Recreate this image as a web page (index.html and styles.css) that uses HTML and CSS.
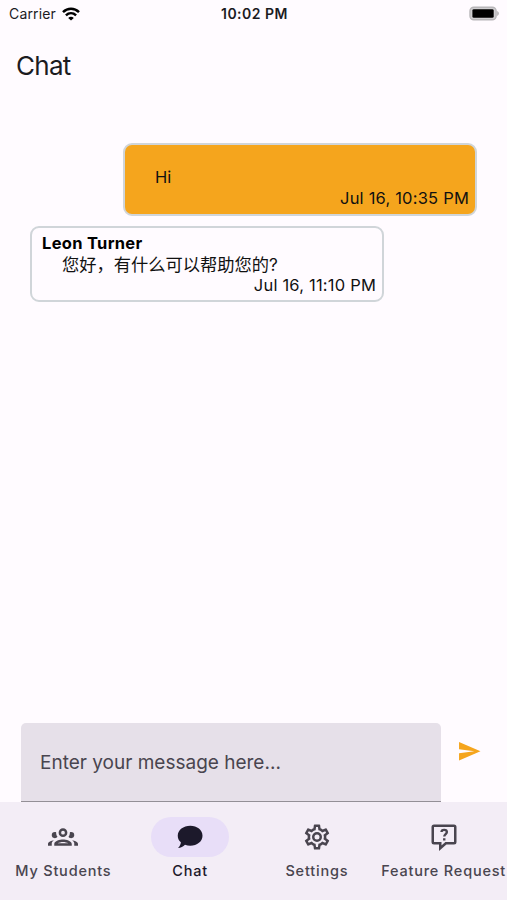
FILE: index.html
```html
<!DOCTYPE html>
<html lang="en">
<head>
  <meta charset="UTF-8" />
  <meta name="viewport" content="width=device-width, initial-scale=1" />
  <title>Chat</title>
  <link rel="stylesheet" href="styles.css">
</head>
<body>
  <div class="status-bar">
    <div class="carrier">
      <span>Carrier</span>
      <svg class="wifi" viewBox="0 0 18 14" fill="none" stroke="#000" stroke-width="2.5">
        <path d="M1 5.2C5.6.7 12.4.7 17 5.2" />
        <path d="M3.9 8.3C6.9 5.5 11.1 5.5 14.1 8.3" />
        <path d="M9 13.6L6.2 10.9C7.8 9.4 10.2 9.4 11.8 10.9Z" fill="#000" stroke="none" />
      </svg>
    </div>
    <span class="clock">10:02 PM</span>
    <svg class="battery" viewBox="0 0 32 15">
      <rect x="1" y="1" width="27" height="13" rx="4" fill="#d0ced1" stroke="#b8b6b9" stroke-width="1.4" />
      <rect x="3.5" y="3" width="22" height="9" rx="1.5" fill="#000" />
      <path d="M29 5C31.5 6 31.5 9 29 10Z" fill="#b8b6b9" />
    </svg>
  </div>

  <header class="header">
    <h1>Chat</h1>
  </header>

  <main class="messages">
    <div class="bubble sent">
      <p class="text">Hi</p>
      <time>Jul 16, 10:35 PM</time>
    </div>
    <div class="bubble received">
      <strong>Leon Turner</strong>
      <p class="text" lang="zh">您好，有什么可以帮助您的?</p>
      <time>Jul 16, 11:10 PM</time>
    </div>
  </main>

  <form class="composer">
    <input class="message-input" type="text" placeholder="Enter your message here..." aria-label="Message" />
    <button class="send" type="button" aria-label="Send">
      <svg viewBox="0 0 24 24"><path d="M2,21L23,12L2,3V10L17,12L2,14V21Z" /></svg>
    </button>
  </form>

  <nav class="tabs">
    <a class="tab">
      <span class="pill">
        <svg viewBox="0 0 24 24"><path d="M12,5A3.5,3.5 0 0,0 8.5,8.5A3.5,3.5 0 0,0 12,12A3.5,3.5 0 0,0 15.5,8.5A3.5,3.5 0 0,0 12,5M12,7A1.5,1.5 0 0,1 13.5,8.5A1.5,1.5 0 0,1 12,10A1.5,1.5 0 0,1 10.5,8.5A1.5,1.5 0 0,1 12,7M5.5,8A2.5,2.5 0 0,0 3,10.5C3,11.44 3.53,12.25 4.29,12.68C4.65,12.88 5.06,13 5.5,13C5.94,13 6.35,12.88 6.71,12.68C7.08,12.47 7.39,12.17 7.62,11.81C6.89,10.86 6.5,9.7 6.5,8.5C6.5,8.41 6.5,8.31 6.5,8.22C6.2,8.08 5.86,8 5.5,8M18.5,8C18.14,8 17.8,8.08 17.5,8.22C17.5,8.31 17.5,8.41 17.5,8.5C17.5,9.7 17.11,10.86 16.38,11.81C16.5,12 16.63,12.15 16.78,12.3C16.94,12.45 17.1,12.58 17.29,12.68C17.65,12.88 18.06,13 18.5,13C18.94,13 19.35,12.88 19.71,12.68C20.47,12.25 21,11.44 21,10.5A2.5,2.5 0 0,0 18.5,8M12,14C9.66,14 5,15.17 5,17.5V19H19V17.5C19,15.17 14.34,14 12,14M4.71,14.55C2.78,14.78 0,15.76 0,17.5V19H3V17.07C3,16.06 3.69,15.22 4.71,14.55M19.29,14.55C20.31,15.22 21,16.06 21,17.07V19H24V17.5C24,15.76 21.22,14.78 19.29,14.55M12,16C13.53,16 15.24,16.5 16.23,17H7.77C8.76,16.5 10.47,16 12,16Z" /></svg>
      </span>
      <span class="label">My Students</span>
    </a>
    <a class="tab active">
      <span class="pill">
        <svg viewBox="0 0 24 24"><path d="M12.2,3C17.7,3 22,6.4 22,10.9C22,15.4 17.7,18.9 12.2,18.9C10.7,18.9 9.3,18.7 8,18.2C6.6,19.8 4.6,20.7 2.4,20.7C3.8,19.5 4.6,18 4.7,16.2C3.1,14.8 2.2,13 2.2,10.9C2.2,6.4 6.7,3 12.2,3Z" /></svg>
      </span>
      <span class="label">Chat</span>
    </a>
    <a class="tab">
      <span class="pill">
        <svg viewBox="0 0 24 24"><path d="M12,8A4,4 0 0,1 16,12A4,4 0 0,1 12,16A4,4 0 0,1 8,12A4,4 0 0,1 12,8M12,10A2,2 0 0,0 10,12A2,2 0 0,0 12,14A2,2 0 0,0 14,12A2,2 0 0,0 12,10M10,22C9.75,22 9.54,21.82 9.5,21.58L9.13,18.93C8.5,18.68 7.96,18.34 7.44,17.94L4.95,18.95C4.73,19.03 4.46,18.95 4.34,18.73L2.34,15.27C2.21,15.05 2.27,14.78 2.46,14.63L4.57,12.97L4.5,12L4.57,11L2.46,9.37C2.27,9.22 2.21,8.95 2.34,8.73L4.34,5.27C4.46,5.05 4.73,4.96 4.95,5.05L7.44,6.05C7.96,5.66 8.5,5.32 9.13,5.07L9.5,2.42C9.54,2.18 9.75,2 10,2H14C14.25,2 14.46,2.18 14.5,2.42L14.87,5.07C15.5,5.32 16.04,5.66 16.56,6.05L19.05,5.05C19.27,4.96 19.54,5.05 19.66,5.27L21.66,8.73C21.79,8.95 21.73,9.22 21.54,9.37L19.43,11L19.5,12L19.43,13L21.54,14.63C21.73,14.78 21.79,15.05 21.66,15.27L19.66,18.73C19.54,18.95 19.27,19.04 19.05,18.95L16.56,17.95C16.04,18.34 15.5,18.68 14.87,18.93L14.5,21.58C14.46,21.82 14.25,22 14,22H10M11.25,4L10.88,6.61C9.68,6.86 8.62,7.5 7.85,8.39L5.44,7.35L4.69,8.65L6.8,10.2C6.4,11.37 6.4,12.64 6.8,13.8L4.68,15.36L5.43,16.66L7.86,15.62C8.63,16.5 9.68,17.14 10.87,17.38L11.24,20H12.76L13.13,17.39C14.32,17.14 15.37,16.5 16.14,15.62L18.57,16.66L19.32,15.36L17.2,13.81C17.6,12.64 17.6,11.37 17.2,10.2L19.31,8.65L18.56,7.35L16.15,8.39C15.38,7.5 14.32,6.86 13.12,6.62L12.75,4H11.25Z" /></svg>
      </span>
      <span class="label">Settings</span>
    </a>
    <a class="tab">
      <span class="pill">
        <svg class="outline" viewBox="0 0 24 24">
          <path d="M4 3H20A1 1 0 0 1 21 4V16A1 1 0 0 1 20 17H13.5L9 21V17H4A1 1 0 0 1 3 16V4A1 1 0 0 1 4 3Z" />
          <path d="M10 8C10 5.7 14.3 5.700 14.3 8C14.3 9.500 12.200 9.800 12.200 11.6M12.2 13V14.8" stroke-width="1.9" />
        </svg>
      </span>
      <span class="label">Feature Request</span>
    </a>
  </nav>
</body>
</html>
```
FILE: styles.css
```css
:root {
  --bg-color: #fffbff;
  --accent-color: #f5a51d;
  --nav-color: #f3edf6;
  --input-color: #e6e0e9;
  --icon-color: #49454f;
  --border-color: #d0d5d9;
}
* {
  box-sizing: border-box;
}
body {
  margin: 0;
  height: 100vh;
  display: flex;
  flex-direction: column;
  overflow: hidden;
  background: var(--bg-color);
  color: #1c1b1f;
  font-family: Inter, "Noto Sans CJK SC", sans-serif;
}
.status-bar {
  height: 27px;
  padding: 0 7px 0 9px;
  display: grid;
  grid-template-columns: 1fr auto 1fr;
  align-items: center;
  font-size: 14px;
  line-height: 27px;
}
.carrier {
  display: flex;
  align-items: center;
  gap: 6px;
  letter-spacing: 0.15px;
}
.wifi {
  width: 18px;
  height: 14px;
}
.clock {
  font-weight: 600;
  letter-spacing: 0.5px;
}
.battery {
  justify-self: end;
  width: 31px;
  height: 15px;
}
.header {
  height: 77px;
  padding: 0 16px;
  display: flex;
  align-items: center;
}
h1 {
  margin: 0;
  font-size: 26px;
  font-weight: 400;
  letter-spacing: -0.7px;
}
.messages {
  flex: 1;
  padding: 39px 30px 0;
  display: flex;
  flex-direction: column;
  gap: 10px;
}
.bubble {
  width: 354px;
  border: 2px solid var(--border-color);
  border-radius: 9px;
  display: flex;
  flex-direction: column;
  padding: 5px 6px 5px 10px;
  color: #111;
  font-size: 16.5px;
  line-height: 21px;
}
.bubble .text {
  margin: 0 0 0 20px;
}
.bubble .text:lang(zh) {
  font-size: 17.25px;
}
.bubble time {
  align-self: flex-end;
  letter-spacing: 0.2px;
}
.bubble strong {
  font-weight: 700;
  letter-spacing: 0.3px;
  color: #000;
}
.sent {
  align-self: flex-end;
  height: 73px;
  padding-top: 22px;
  background: var(--accent-color);
}
.received {
  height: 76px;
}
.composer {
  height: 79px;
  padding-left: 21px;
  display: flex;
}
.message-input {
  width: 420px;
  height: 79px;
  padding: 1px 19px 0;
  border: 0;
  border-bottom: 1px solid #938f96;
  border-radius: 5px 5px 0 0;
  background: var(--input-color);
  font-family: inherit;
  font-size: 19px;
  outline: none;
}
.message-input::placeholder {
  color: var(--icon-color);
  opacity: 1;
}
.send {
  align-self: flex-start;
  margin: 16px 0 0 16px;
  padding: 0;
  border: 0;
  background: none;
}
.send svg {
  display: block;
  width: 24.5px;
  height: 24.5px;
  fill: var(--accent-color);
}
.tabs {
  height: 98px;
  display: flex;
  background: var(--nav-color);
}
.tab {
  flex: 1 1 0;
  min-width: 0;
  padding-top: 15px;
  display: flex;
  flex-direction: column;
  align-items: center;
  color: var(--icon-color);
}
.pill {
  width: 78px;
  height: 40px;
  border-radius: 20px;
  display: flex;
  align-items: center;
  justify-content: center;
  padding-bottom: 1px;
}
.pill svg {
  width: 30px;
  height: 30px;
  fill: currentColor;
}
.pill .outline {
  fill: none;
  stroke: currentColor;
  stroke-width: 2;
}
.label {
  margin-top: 4px;
  font-size: 14.5px;
  font-weight: 500;
  line-height: 20px;
  letter-spacing: 0.8px;
  white-space: nowrap;
}
.active {
  color: #1c192b;
}
.active .pill {
  background: #e8def8;
}
```
